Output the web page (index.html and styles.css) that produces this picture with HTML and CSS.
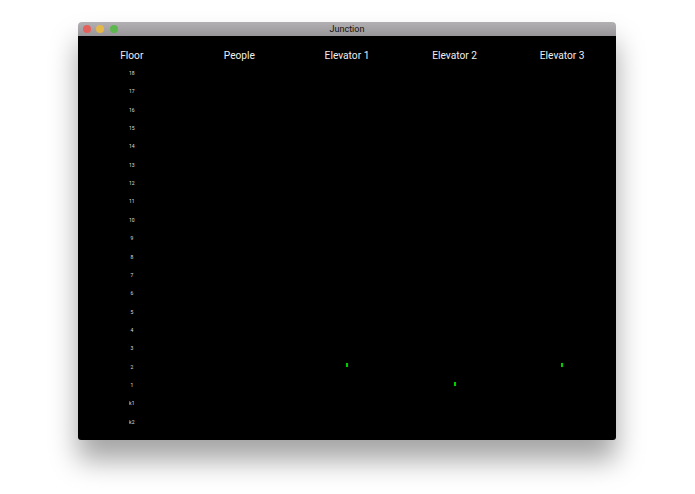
FILE: index.html
```
<!DOCTYPE html>
<html lang="en">
<head>
  <meta charset="UTF-8">
  <meta name="viewport" content="width=device-width, initial-scale=1.0">
  <title>Junction</title>
  <link rel="stylesheet" href="styles.css">
</head>
<body>
  <div class="window">
    <div class="titlebar">
      <div class="lights">
        <span class="light red"></span>
        <span class="light yellow"></span>
        <span class="light green"></span>
      </div>
      <div class="title">Junction</div>
    </div>
    <div class="content">
      <div class="row head">
        <div>Floor</div>
        <div>People</div>
        <div>Elevator 1</div>
        <div>Elevator 2</div>
        <div>Elevator 3</div>
      </div>
      <div class="row"><div class="floor">18</div></div>
      <div class="row"><div class="floor">17</div></div>
      <div class="row"><div class="floor">16</div></div>
      <div class="row"><div class="floor">15</div></div>
      <div class="row"><div class="floor">14</div></div>
      <div class="row"><div class="floor">13</div></div>
      <div class="row"><div class="floor">12</div></div>
      <div class="row"><div class="floor">11</div></div>
      <div class="row"><div class="floor">10</div></div>
      <div class="row"><div class="floor">9</div></div>
      <div class="row"><div class="floor">8</div></div>
      <div class="row"><div class="floor">7</div></div>
      <div class="row"><div class="floor">6</div></div>
      <div class="row"><div class="floor">5</div></div>
      <div class="row"><div class="floor">4</div></div>
      <div class="row"><div class="floor">3</div></div>
      <div class="row">
        <div class="floor">2</div>
        <div class="cell elevator-1"><span class="car"></span></div>
        <div class="cell elevator-3"><span class="car"></span></div>
      </div>
      <div class="row">
        <div class="floor">1</div>
        <div class="cell elevator-2"><span class="car"></span></div>
      </div>
      <div class="row"><div class="floor">k1</div></div>
      <div class="row"><div class="floor">k2</div></div>
    </div>
  </div>
</body>
</html>
```

FILE: styles.css
```
html, body {
  height: 100%;
}
body {
  margin: 0;
  padding: 22px 79px 0 78px;
  box-sizing: border-box;
  background-color: #fff;
  overflow: hidden;
  font-family: Roboto, "Liberation Sans", sans-serif;
}
.window {
  height: 418px;
  border-radius: 4px;
  box-shadow: 0 20px 28px rgba(0, 0, 0, 0.36);
  display: flex;
  flex-direction: column;
}
.titlebar {
  height: 14px;
  display: flex;
  align-items: center;
  position: relative;
  border-radius: 4px 4px 0 0;
  background: linear-gradient(#b2b0b2, #989698);
}
.lights {
  display: flex;
  gap: 5.4px;
  padding-left: 5px;
}
.light {
  width: 8px;
  height: 8px;
  border-radius: 50%;
}
.red {
  background-color: #e4605a;
}
.yellow {
  background-color: #e5b84a;
}
.green {
  background-color: #5cb84e;
}
.title {
  position: absolute;
  left: 0;
  right: 0;
  text-align: center;
  font-size: 9px;
  color: #111;
}
.content {
  flex: 1;
  padding-bottom: 9px;
  border-radius: 0 0 3px 3px;
  background-color: #000;
  color: #fff;
}
.row {
  display: grid;
  grid-template-columns: repeat(5, 1fr);
  height: 18.36px;
  align-items: center;
  text-align: center;
}
.head {
  height: 27.8px;
  padding-top: 11px;
  box-sizing: border-box;
  font-size: 10.2px;
  color: #eee;
}
.floor {
  font-size: 5px;
  color: #fff;
  opacity: 0.85;
}
.cell {
  display: flex;
  justify-content: center;
  margin-top: -3px;
}
.elevator-1 {
  grid-column: 3;
}
.elevator-2 {
  grid-column: 4;
}
.elevator-3 {
  grid-column: 5;
}
.car {
  width: 2px;
  height: 4px;
  background-color: #0c0;
  box-shadow: 0 0 1px #070;
}
```
